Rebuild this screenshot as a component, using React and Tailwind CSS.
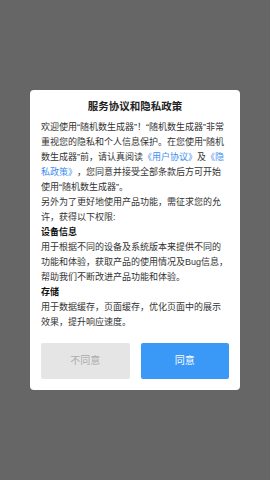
import React from 'react';

const App = () => {
  return (
    // overlay
    <div className="h-[480px] w-full bg-[#666666] flex items-center justify-center font-['Liberation_Sans','Noto_Sans_CJK_SC',sans-serif]">

      {/* dialog card */}
      <div className="w-[210px] bg-white rounded-[4px] px-[11px] pt-[8px] pb-[11px]">
        <h2 className="text-center text-[10.5px] leading-[16px] font-bold text-[#222]">服务协议和隐私政策</h2>

        <div className="mt-[6px] text-[9px] leading-[15px] text-[#333] [text-spacing-trim:space-all]">
          <p>
            欢迎使用“随机数生成器”！“随机数生成器”非常重视您的隐私和个人信息保护。在您使用“随机数生成器”前，请认真阅读<span className="text-[#3d8ef0]">《用户协议》</span>及<span className="text-[#3d8ef0]">《隐私政策》</span>，您同意并接受全部条款后方可开始使用“随机数生成器”。
          </p>
          <p>另外为了更好地使用产品功能，需征求您的允许，获得以下权限:</p>
          <p className="font-bold text-[#111]">设备信息</p>
          <p>用于根据不同的设备及系统版本来提供不同的功能和体验，获取产品的使用情况及Bug信息，帮助我们不断改进产品功能和体验。</p>
          <p className="font-bold text-[#111]">存储</p>
          <p>用于数据缓存，页面缓存，优化页面中的展示效果，提升响应速度。</p>
        </div>

        {/* buttons */}
        <div className="mt-[12.5px] flex gap-[11px]">
          <button className="flex-1 h-[36px] rounded-[2px] bg-[#e6e5e5] text-[#ababab] text-[10px]">不同意</button>
          <button className="flex-1 h-[36px] rounded-[2px] bg-[#3a99f7] text-white text-[10px]">同意</button>
        </div>
      </div>
    </div>
  );
};

export default App;
